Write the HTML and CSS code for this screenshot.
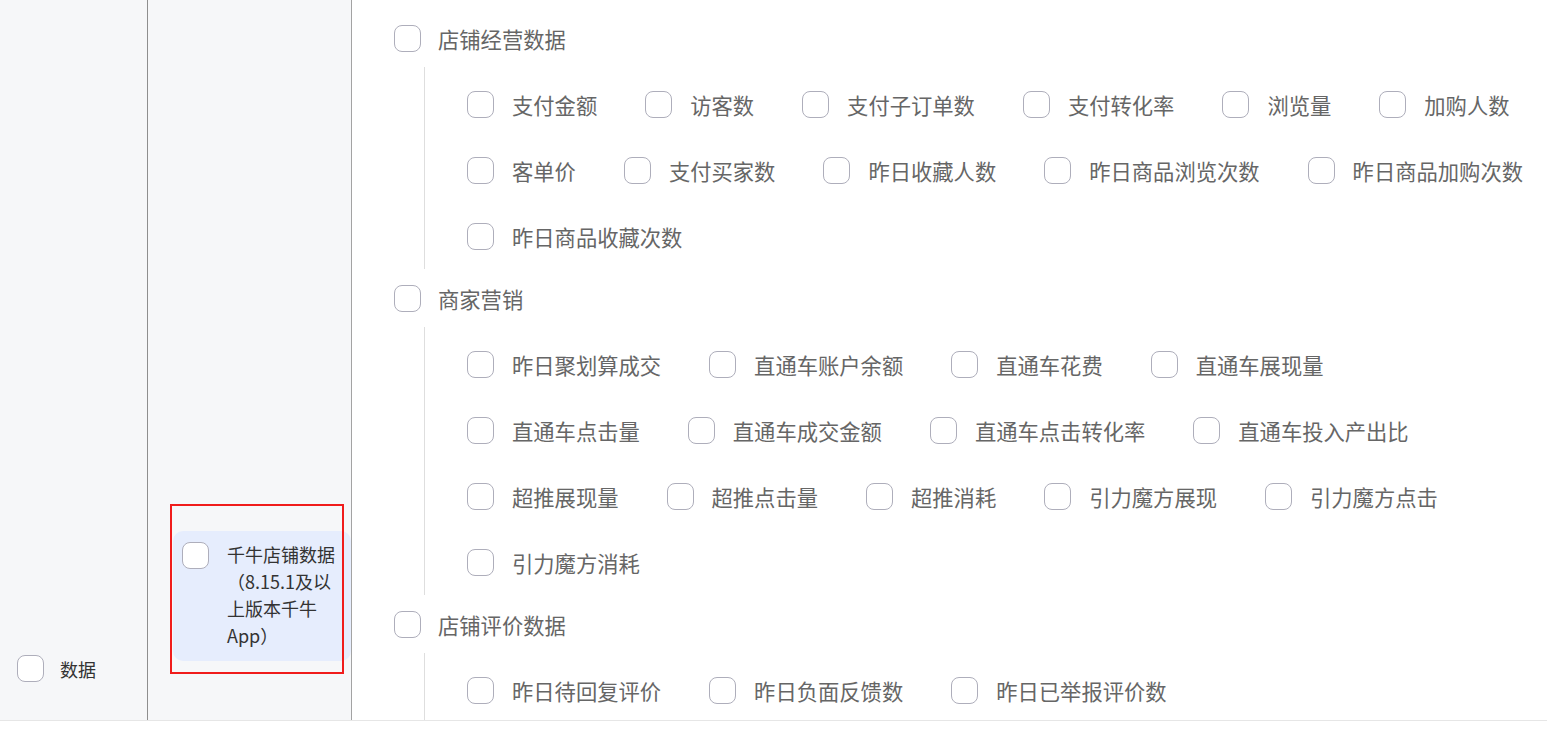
FILE: index.html
```html
<!DOCTYPE html>
<html lang="zh-CN">
<head>
    <meta charset="UTF-8">
    <meta name="viewport" content="width=device-width, initial-scale=1.0">
    <title>数据权限</title>
    <link rel="stylesheet" href="styles.css">
</head>
<body>
    <div class="board">
        <div class="col-root">
            <label class="root-item">
                <span class="check"></span>
                <span>数据</span>
            </label>
        </div>

        <div class="col-sub">
            <label class="sub-item">
                <span class="check"></span>
                <span class="sub-text">千牛店铺数据（8.15.1及以上版本千牛App）</span>
            </label>
            <div class="mark"></div>
        </div>

        <div class="col-detail">
            <div class="group">
                <label class="group-head"><span class="check"></span><span>店铺经营数据</span></label>
                <div class="group-list">
                    <label class="field"><span class="check"></span><span>支付金额</span></label>
                    <label class="field"><span class="check"></span><span>访客数</span></label>
                    <label class="field"><span class="check"></span><span>支付子订单数</span></label>
                    <label class="field"><span class="check"></span><span>支付转化率</span></label>
                    <label class="field"><span class="check"></span><span>浏览量</span></label>
                    <label class="field"><span class="check"></span><span>加购人数</span></label>
                    <label class="field"><span class="check"></span><span>客单价</span></label>
                    <label class="field"><span class="check"></span><span>支付买家数</span></label>
                    <label class="field"><span class="check"></span><span>昨日收藏人数</span></label>
                    <label class="field"><span class="check"></span><span>昨日商品浏览次数</span></label>
                    <label class="field"><span class="check"></span><span>昨日商品加购次数</span></label>
                    <label class="field"><span class="check"></span><span>昨日商品收藏次数</span></label>
                </div>
            </div>

            <div class="group">
                <label class="group-head"><span class="check"></span><span>商家营销</span></label>
                <div class="group-list">
                    <label class="field"><span class="check"></span><span>昨日聚划算成交</span></label>
                    <label class="field"><span class="check"></span><span>直通车账户余额</span></label>
                    <label class="field"><span class="check"></span><span>直通车花费</span></label>
                    <label class="field"><span class="check"></span><span>直通车展现量</span></label>
                    <label class="field"><span class="check"></span><span>直通车点击量</span></label>
                    <label class="field"><span class="check"></span><span>直通车成交金额</span></label>
                    <label class="field"><span class="check"></span><span>直通车点击转化率</span></label>
                    <label class="field"><span class="check"></span><span>直通车投入产出比</span></label>
                    <label class="field"><span class="check"></span><span>超推展现量</span></label>
                    <label class="field"><span class="check"></span><span>超推点击量</span></label>
                    <label class="field"><span class="check"></span><span>超推消耗</span></label>
                    <label class="field"><span class="check"></span><span>引力魔方展现</span></label>
                    <label class="field"><span class="check"></span><span>引力魔方点击</span></label>
                    <label class="field"><span class="check"></span><span>引力魔方消耗</span></label>
                </div>
            </div>

            <div class="group">
                <label class="group-head"><span class="check"></span><span>店铺评价数据</span></label>
                <div class="group-list">
                    <label class="field"><span class="check"></span><span>昨日待回复评价</span></label>
                    <label class="field"><span class="check"></span><span>昨日负面反馈数</span></label>
                    <label class="field"><span class="check"></span><span>昨日已举报评价数</span></label>
                </div>
            </div>
        </div>
    </div>
</body>
</html>
```

FILE: styles.css
```css
body {
    margin: 0;
    font-family: "Noto Sans CJK SC", "Noto Sans", sans-serif;
    background-color: #fff;
}
.board {
    display: flex;
    height: 720px;
    border-bottom: 1px solid #e6e6e6;
    overflow: hidden;
}
.check {
    flex: none;
    width: 25px;
    height: 25px;
    border: 1px solid #aeaebb;
    border-radius: 8px;
    background-color: #fff;
}

/* left column */
.col-root {
    width: 148px;
    flex: none;
    display: flex;
    flex-direction: column;
    justify-content: flex-end;
    padding: 0 0 38px 17px;
    box-sizing: border-box;
    background-color: #f6f7f9;
    border-right: 1px solid #8e8e8e;
}
.root-item {
    display: flex;
    align-items: center;
    gap: 16px;
    font-size: 18px;
    color: #333;
}

/* middle column */
.col-sub {
    width: 204px;
    flex: none;
    position: relative;
    display: flex;
    flex-direction: column;
    justify-content: flex-end;
    padding: 0 0 59px 25px;
    box-sizing: border-box;
    background-color: #f6f7f9;
    border-right: 1px solid #a3a3a3;
}
.sub-item {
    display: flex;
    align-items: flex-start;
    gap: 18px;
    padding: 10px 10px 12px 9px;
    background-color: #e6edfd;
    border-radius: 10px;
}
.sub-item .check {
    margin-top: 1px;
}
.sub-text {
    font-size: 18px;
    line-height: 27px;
    color: #333;
}
.mark {
    position: absolute;
    left: 22px;
    bottom: 46px;
    width: 170px;
    height: 166px;
    border: 2px solid #f01c1c;
}

/* right column */
.col-detail {
    flex: 1;
    padding: 9px 15px 0 42px;
    overflow: hidden;
}
.group-head {
    display: flex;
    align-items: center;
    gap: 17px;
    height: 58px;
    font-size: 21.3px;
    color: #666;
}
.group-list {
    display: flex;
    flex-wrap: wrap;
    column-gap: 48px;
    margin-left: 30px;
    padding: 4px 0 0 42px;
    border-left: 1px solid #dedede;
}
.field {
    display: flex;
    align-items: center;
    gap: 18px;
    height: 66px;
    font-size: 21.3px;
    color: #666;
}
```
